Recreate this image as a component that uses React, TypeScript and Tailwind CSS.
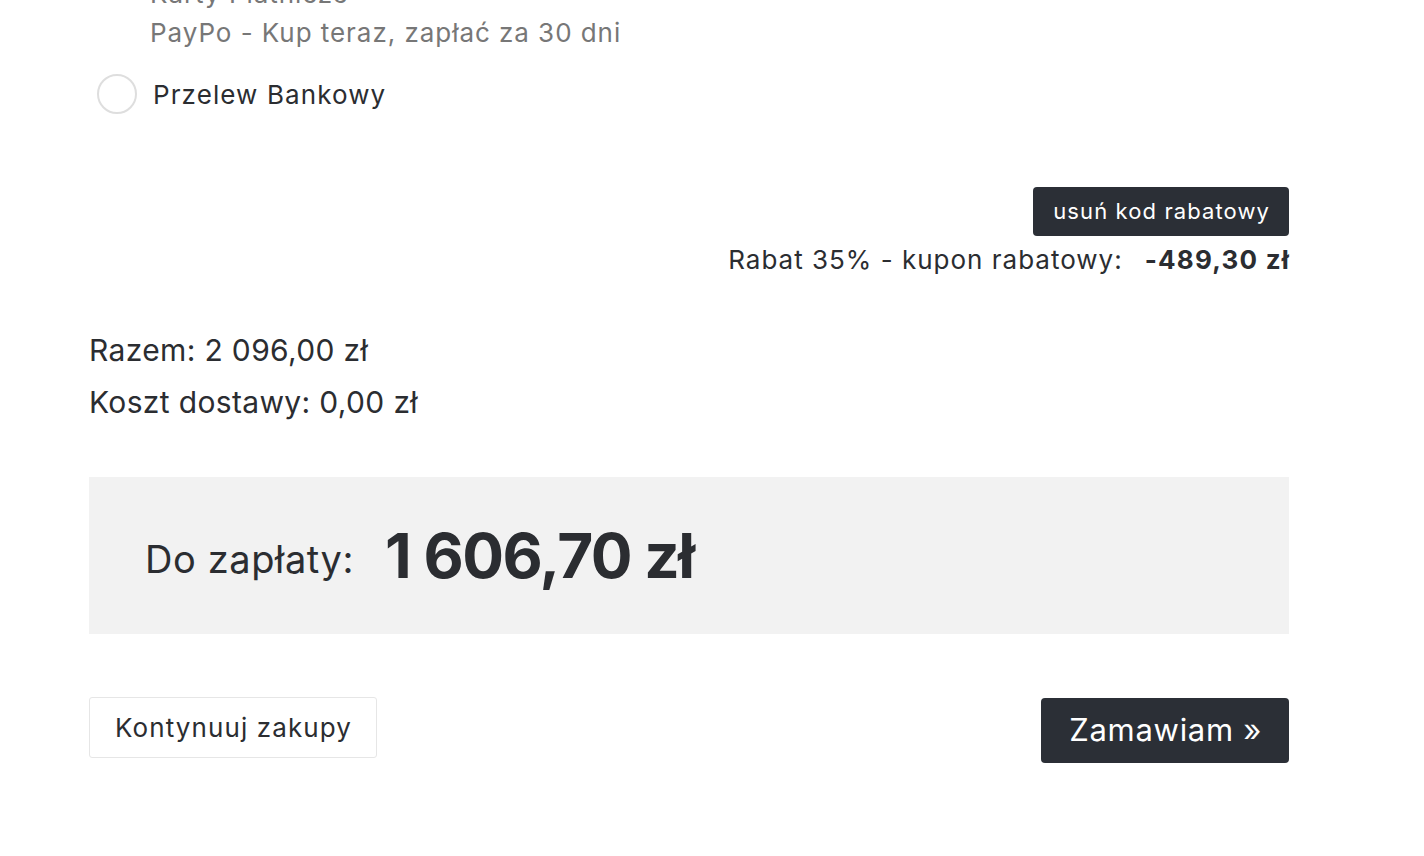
export default function App() {
  return (
    <div className="min-h-[856px] w-full overflow-hidden bg-white text-[#2b2d31]" style={{ fontFamily: 'Inter, "Noto Sans", sans-serif' }}>
      <div className="ml-[89px] w-[1200px]">
        <div className="-mt-[26px] pl-[61px] text-[26px] leading-[39px] tracking-[0.95px] text-[#777777]">
          <div>Karty Płatnicze</div>
          <div>PayPo - Kup teraz, zapłać za 30 dni</div>
        </div>
        <div className="mt-[22px] flex h-[40px] items-center pl-[8px]">
          <span className="h-[40px] w-[40px] rounded-full border-2 border-[#dedede] bg-white" />
          <span className="ml-[16px] text-[26px] leading-[39px] tracking-[1.1px]">Przelew Bankowy</span>
        </div>
        <div className="mt-[73px] flex flex-col items-end">
          <button className="h-[49px] rounded-[4px] bg-[#2b2f36] pl-[20px] pr-[19px] text-[22px] tracking-[1.1px] text-white">usuń kod rabatowy</button>
          <div className="mt-[4px] flex text-[26px] leading-[39px]">
            <span className="tracking-[1px]">Rabat 35% - kupon rabatowy:</span>
            <span className="ml-[22px] -mr-[1px] font-bold tracking-[1.2px]">-489,30 zł</span>
          </div>
        </div>
        <div className="mt-[45px] text-[30px] leading-[52px] tracking-[0.35px]">
          <div>Razem: 2 096,00 zł</div>
          <div>Koszt dostawy: 0,00 zł</div>
        </div>
        <div className="mt-[49px] flex h-[157px] items-center bg-[#f2f2f2] pl-[56px]">
          <span className="mt-[8px] text-[38px] tracking-[0.6px]">Do zapłaty:</span>
          <span className="ml-[31px] text-[62px] font-bold tracking-[-1.5px]">1 606,70 zł</span>
        </div>
        <div className="mt-[63px] flex items-start justify-between">
          <button className="h-[61px] rounded-[3px] border border-[#e6e6e6] bg-white pl-[25px] pr-[24px] text-[26px] tracking-[1.1px]">Kontynuuj zakupy</button>
          <button className="mt-[1px] h-[65px] rounded-[4px] bg-[#2b2f36] pl-[28px] pr-[27px] text-[31px] tracking-[0.7px] text-white">Zamawiam »</button>
        </div>
      </div>
    </div>
  );
}
